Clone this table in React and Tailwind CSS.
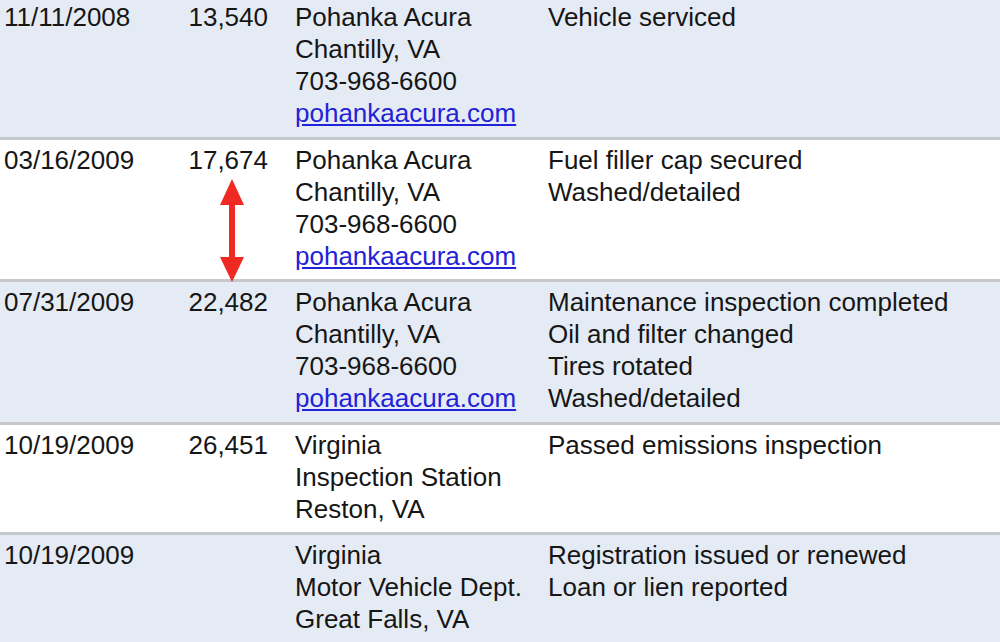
const rows = [
  {
    date: '11/11/2008',
    miles: '13,540',
    place: ['Pohanka Acura', 'Chantilly, VA', '703-968-6600'],
    link: 'pohankaacura.com',
    notes: ['Vehicle serviced'],
    shade: true,
  },
  {
    date: '03/16/2009',
    miles: '17,674',
    place: ['Pohanka Acura', 'Chantilly, VA', '703-968-6600'],
    link: 'pohankaacura.com',
    notes: ['Fuel filler cap secured', 'Washed/detailed'],
    arrow: true,
  },
  {
    date: '07/31/2009',
    miles: '22,482',
    place: ['Pohanka Acura', 'Chantilly, VA', '703-968-6600'],
    link: 'pohankaacura.com',
    notes: ['Maintenance inspection completed', 'Oil and filter changed', 'Tires rotated', 'Washed/detailed'],
    shade: true,
  },
  {
    date: '10/19/2009',
    miles: '26,451',
    place: ['Virginia', 'Inspection Station', 'Reston, VA'],
    notes: ['Passed emissions inspection'],
  },
  {
    date: '10/19/2009',
    miles: '',
    place: ['Virginia', 'Motor Vehicle Dept.', 'Great Falls, VA'],
    notes: ['Registration issued or renewed', 'Loan or lien reported'],
    shade: true,
  },
]

function Arrow() {
  return (
    <svg width="28" height="104" viewBox="0 0 28 104" className="absolute left-[48px] top-[35px]">
      <polygon points="14,0 26,26 2,26" fill="#ee2a22" />
      <rect x="11" y="24" width="6" height="56" fill="#ee2a22" />
      <polygon points="14,103 26,78 2,78" fill="#ee2a22" />
    </svg>
  )
}

export default function App() {
  return (
    <div
      className="h-[642px] w-[1000px] overflow-hidden bg-white text-[26px] leading-[32px] text-[#161616]"
      style={{ fontFamily: '"Liberation Sans", Arial, sans-serif' }}
    >
      {rows.map((r, i) => (
        <div
          key={i}
          className={`grid grid-cols-[166px_98px_280px_1fr] pb-[7.5px] pl-[4px] ${
            i === 0 ? 'pt-[1px]' : 'border-t-[3px] border-[#c6c8cb] pt-[4px]'
          } ${r.shade ? 'bg-[#e5ebf4]' : 'bg-white'}`}
        >
          <div>{r.date}</div>
          <div className="relative text-right">
            {r.miles}
            {r.arrow && <Arrow />}
          </div>
          <div className="pl-[27px]">
            {r.place.map((p) => (
              <div key={p}>{p}</div>
            ))}
            {r.link && <div className="text-[#2222d6] underline">{r.link}</div>}
          </div>
          <div>
            {r.notes.map((n) => (
              <div key={n}>{n}</div>
            ))}
          </div>
        </div>
      ))}
    </div>
  )
}
